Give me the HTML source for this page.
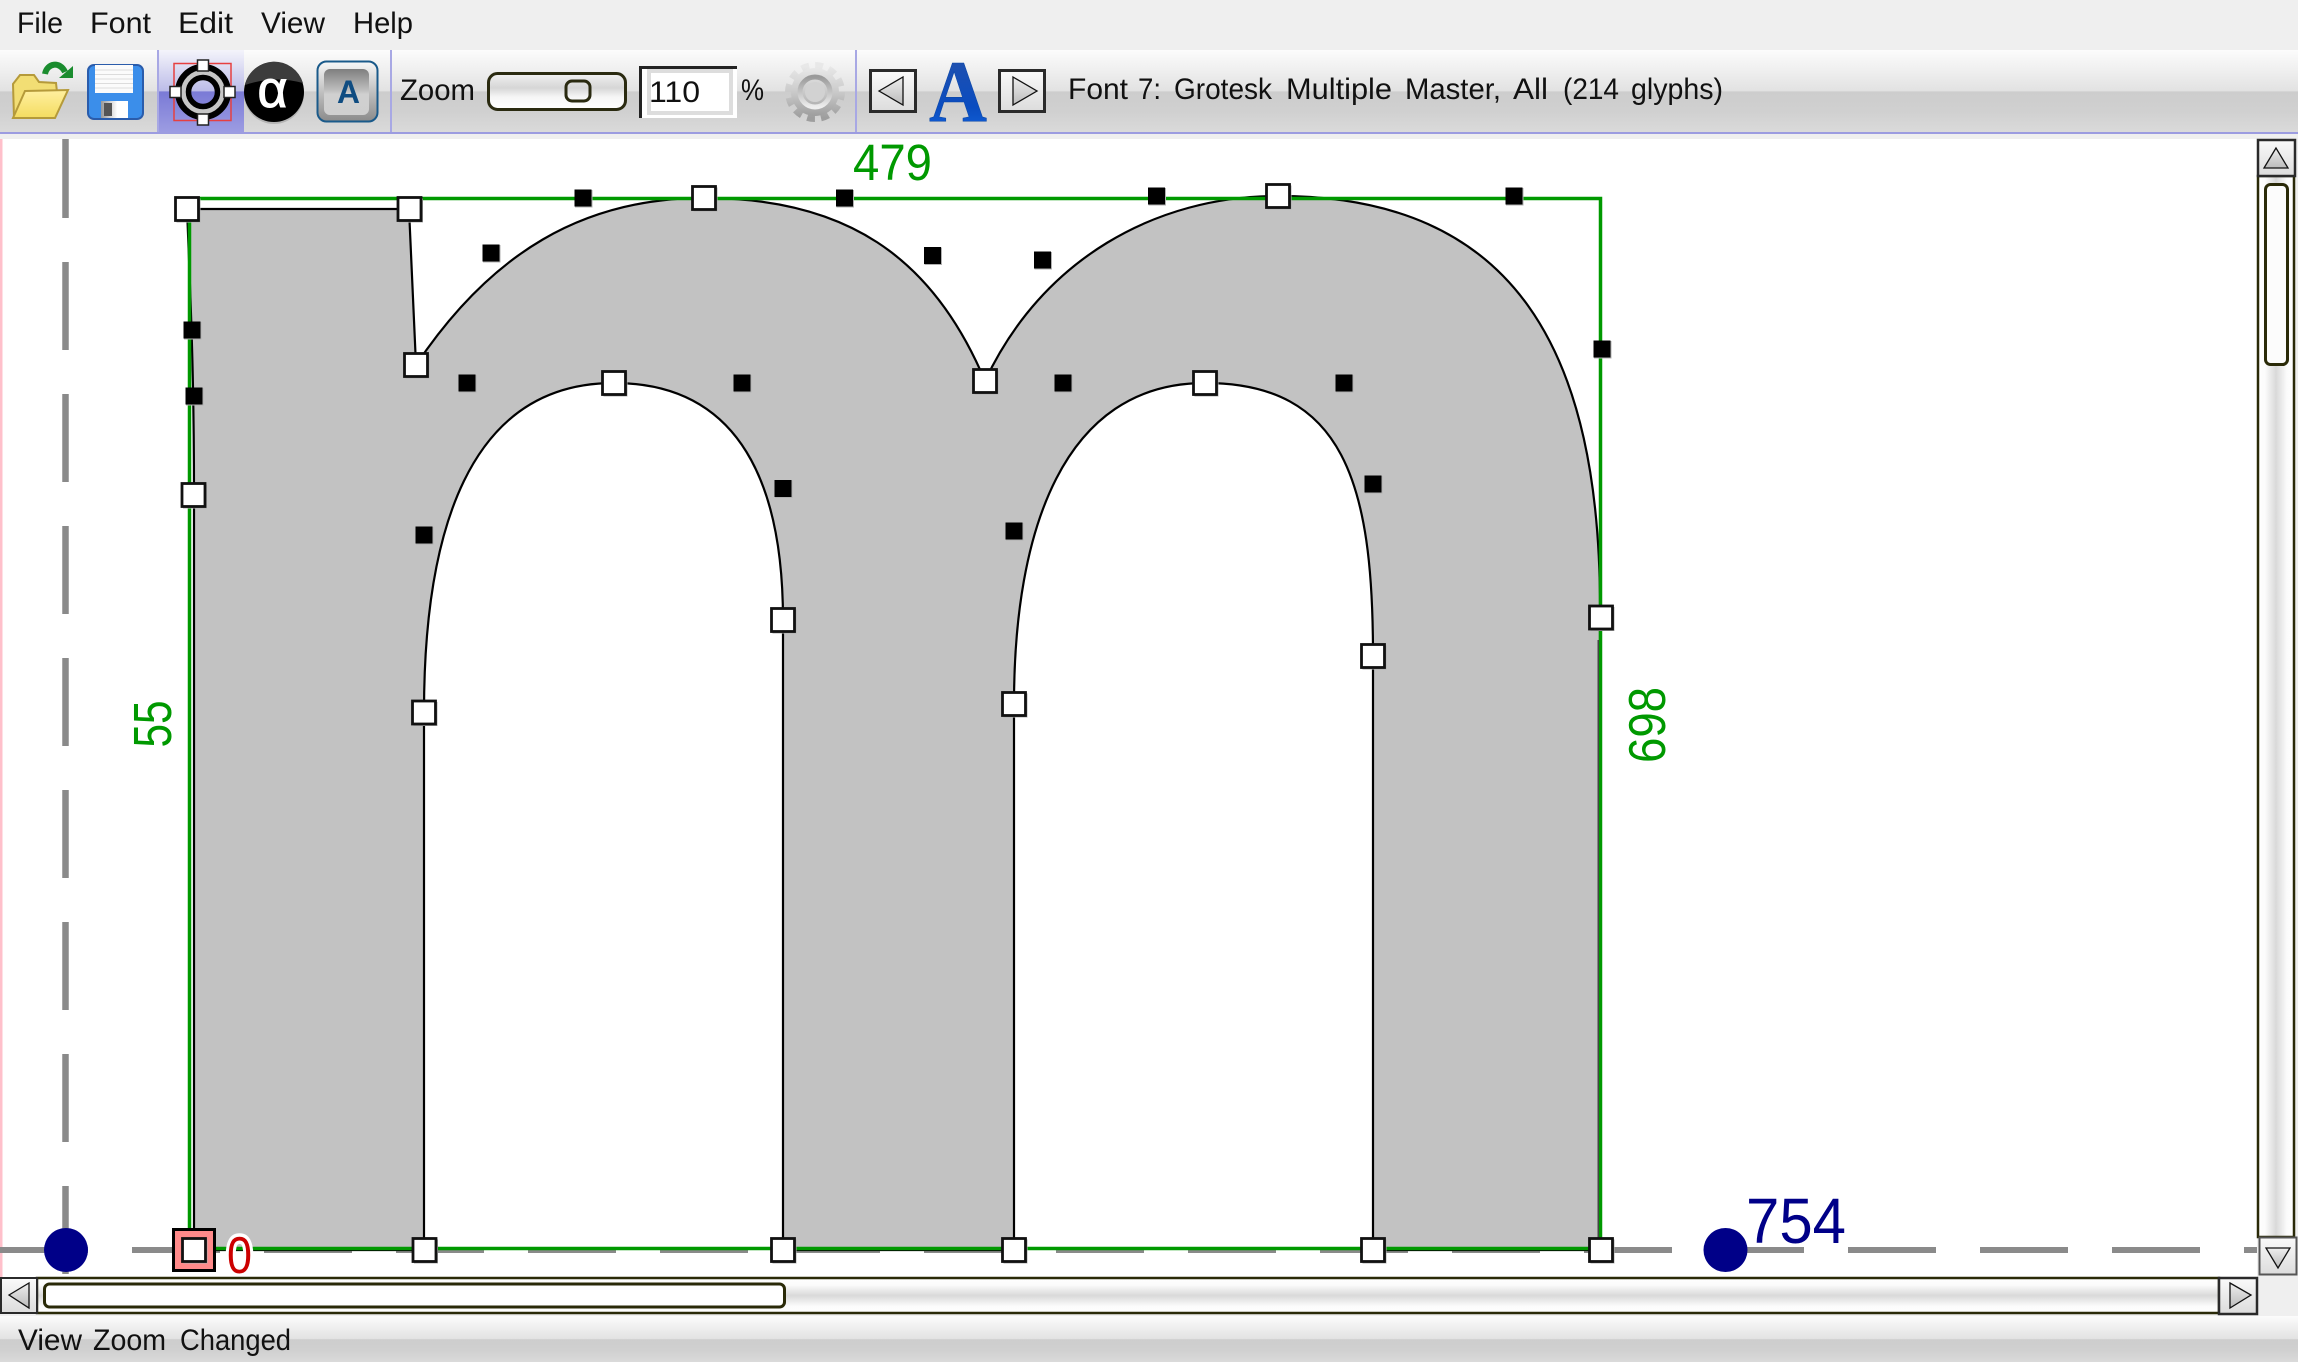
<!DOCTYPE html>
<html><head><meta charset="utf-8"><title>Font 7: Grotesk Multiple Master</title>
<style>
html,body{margin:0;padding:0;background:#efefef;width:2298px;height:1362px;overflow:hidden}
svg{display:block}
text{font-family:"Liberation Sans",sans-serif}
</style></head><body>
<svg xmlns="http://www.w3.org/2000/svg" width="2298" height="1362" viewBox="0 0 2298 1362">
<defs>
<linearGradient id="bar" x1="0" y1="0" x2="0" y2="1"><stop offset="0" stop-color="#fcfcfc"/><stop offset=".5" stop-color="#e2e2e2"/><stop offset=".51" stop-color="#cdcdcd"/><stop offset=".75" stop-color="#d0d0d0"/><stop offset="1" stop-color="#dadada"/></linearGradient>
<linearGradient id="hl" x1="0" y1="0" x2="0" y2="1"><stop offset="0" stop-color="#f4f4fb"/><stop offset=".5" stop-color="#bcbce8"/><stop offset=".51" stop-color="#7a7ad6"/><stop offset="1" stop-color="#9c9ce2"/></linearGradient>
<linearGradient id="sv" x1="0" y1="0" x2="0" y2="1"><stop offset="0" stop-color="#fff"/><stop offset=".2" stop-color="#fbfbfb"/><stop offset=".5" stop-color="#d9d9d9"/><stop offset=".8" stop-color="#fbfbfb"/><stop offset="1" stop-color="#fff"/></linearGradient>
<linearGradient id="sh" x1="0" y1="0" x2="1" y2="0"><stop offset="0" stop-color="#fff"/><stop offset=".2" stop-color="#fbfbfb"/><stop offset=".5" stop-color="#d9d9d9"/><stop offset=".8" stop-color="#fbfbfb"/><stop offset="1" stop-color="#fff"/></linearGradient>
<linearGradient id="sl" x1="0" y1="0" x2="0" y2="1"><stop offset="0" stop-color="#f2f2f2"/><stop offset=".4" stop-color="#d6d6d6"/><stop offset=".65" stop-color="#f6f6f6"/><stop offset="1" stop-color="#fff"/></linearGradient>
<linearGradient id="btn" x1="0" y1="0" x2="0" y2="1"><stop offset="0" stop-color="#fafafa"/><stop offset="1" stop-color="#dcdcdc"/></linearGradient>
<linearGradient id="tri" x1="0" y1="0" x2="0" y2="1"><stop offset="0" stop-color="#eeeeee"/><stop offset="1" stop-color="#bbbbbb"/></linearGradient>
<linearGradient id="fold" x1="0" y1="0" x2="0" y2="1"><stop offset="0" stop-color="#fff0a0"/><stop offset="1" stop-color="#f4dc60"/></linearGradient>
<linearGradient id="shut" x1="0" y1="0" x2="1" y2="0"><stop offset="0" stop-color="#999"/><stop offset=".6" stop-color="#fff"/><stop offset="1" stop-color="#fff"/></linearGradient>
<linearGradient id="abtn" x1="0" y1="0" x2="0" y2="1"><stop offset="0" stop-color="#7f7f7f"/><stop offset=".45" stop-color="#bdbdbd"/><stop offset=".55" stop-color="#d0d0d0"/><stop offset="1" stop-color="#cfcfcf"/></linearGradient>
<linearGradient id="abg" x1="0" y1="0" x2="0" y2="1"><stop offset="0" stop-color="#f8f8f8"/><stop offset="1" stop-color="#8a8a8a"/></linearGradient>
<linearGradient id="blueA" x1="0" y1="0" x2="0" y2="1"><stop offset="0" stop-color="#c0cce0"/><stop offset=".2" stop-color="#1e50b0"/><stop offset=".65" stop-color="#0a4cc0"/><stop offset="1" stop-color="#1468e0"/></linearGradient>
<linearGradient id="gear" x1="0" y1="0" x2="0" y2="1"><stop offset="0" stop-color="#e8e8e8"/><stop offset=".5" stop-color="#cacaca"/><stop offset="1" stop-color="#9e9e9e"/></linearGradient>
<linearGradient id="gear2" x1="0" y1="0" x2="0" y2="1"><stop offset="0" stop-color="#9a9a9a"/><stop offset="1" stop-color="#eeeeee"/></linearGradient>
<g id="h"><rect x="-10.5" y="-10.5" width="24" height="24" fill="#b0b0b0"/><rect x="-11.5" y="-11.5" width="23" height="23" fill="#fff" stroke="#111" stroke-width="2.8"/></g>
<g id="b"><rect x="-8" y="-8" width="17.5" height="17.5" fill="#b0b0b0"/><rect x="-8.5" y="-8.5" width="17" height="17" fill="#000"/></g>
</defs>

<!-- backgrounds -->
<rect width="2298" height="1362" fill="#efefef"/>
<rect x="0" y="50" width="2298" height="82" fill="url(#bar)"/>
<rect x="0" y="132" width="2298" height="2" fill="#9c9ce0"/>
<rect x="0" y="139" width="2257" height="1138" fill="#fff"/>
<rect x="0" y="139" width="2.5" height="1138" fill="#ffc0cb"/>

<!-- menu -->
<g font-size="30" fill="#111">
<text x="17" y="33" textLength="46" lengthAdjust="spacingAndGlyphs">File</text>
<text x="90" y="33" textLength="61" lengthAdjust="spacingAndGlyphs">Font</text>
<text x="178" y="33" textLength="55" lengthAdjust="spacingAndGlyphs">Edit</text>
<text x="261" y="33" textLength="64" lengthAdjust="spacingAndGlyphs">View</text>
<text x="353" y="33" textLength="60" lengthAdjust="spacingAndGlyphs">Help</text>
</g>

<!-- toolbar separators -->
<rect x="157" y="50" width="2" height="82" fill="#a8a8e4"/>
<rect x="390" y="50" width="2" height="82" fill="#a8a8e4"/>
<rect x="855" y="50" width="2" height="82" fill="#a8a8e4"/>

<!-- folder icon -->
<path d="M13,84 L20,75 L34,75 L39,82 L56,83 L57,92 L26,92 L14,118 Z" fill="#f2de74" stroke="#b59a3a" stroke-width="2"/>
<path d="M25,91 L68,90 L55,118 L13,118 Z" fill="url(#fold)" stroke="#b59a3a" stroke-width="2"/>
<path d="M45,74 C47,63 60,61 65,72" fill="none" stroke="#1a8c2e" stroke-width="6"/>
<polygon points="73,66 73,78 59,78" fill="#1a8c2e"/>

<!-- disk icon -->
<rect x="88" y="65" width="55" height="54" rx="6" fill="#3b8eea" stroke="#2a5cab" stroke-width="2"/>
<rect x="95" y="65" width="38" height="28" fill="#fbfbfb"/>
<path d="M95,70H133M95,74.500H133M95,79H133M95,83.500H133M95,88H133" stroke="#dcdcdc" stroke-width="1"/>
<rect x="101" y="101" width="27" height="17" fill="url(#shut)"/>
<rect x="104" y="103" width="8" height="13" fill="#555"/>

<!-- pointer tool (active) -->
<rect x="159" y="50" width="85" height="82" fill="url(#hl)"/>
<rect x="174" y="63.500" width="57" height="57" fill="none" stroke="#e64040" stroke-width="1.5"/>
<circle cx="203" cy="92" r="19.500" fill="none" stroke="#c6c6c6" stroke-width="6"/>
<circle cx="203" cy="92" r="25" fill="none" stroke="#000" stroke-width="6"/>
<circle cx="203" cy="92" r="14.500" fill="none" stroke="#000" stroke-width="5.500"/>
<g fill="#fff" stroke="#222" stroke-width="1.500">
<rect x="197.500" y="60" width="11" height="11"/><rect x="197.500" y="114" width="11" height="11"/>
<rect x="170" y="86.500" width="11" height="11"/><rect x="224" y="86.500" width="11" height="11"/>
</g>

<!-- alpha tool -->
<circle cx="274" cy="94" r="30" fill="#b4b4b4"/>
<circle cx="274" cy="92" r="30" fill="#000"/>
<path d="M245,85 A30,30 0 0 1 303,83 Q274,75 245,85 Z" fill="#3c3c3c"/>
<text x="257.500" y="107" font-size="52" fill="#fff" stroke="#fff" stroke-width="1" textLength="30" lengthAdjust="spacingAndGlyphs">α</text>

<!-- A tool -->
<rect x="317.500" y="61.500" width="60" height="60" rx="9" fill="url(#abg)" stroke="#1a5a8a" stroke-width="2"/>
<rect x="324" y="69" width="45" height="46" rx="6" fill="url(#abtn)"/>
<text x="337" y="103" font-size="32" font-weight="bold" fill="#0f4c81" textLength="23" lengthAdjust="spacingAndGlyphs">A</text>

<!-- zoom controls -->
<text x="400" y="100" font-size="30" fill="#111" textLength="75" lengthAdjust="spacingAndGlyphs">Zoom</text>
<rect x="488.500" y="73.500" width="137" height="36" rx="9" fill="url(#sl)" stroke="#2a2a10" stroke-width="3"/>
<rect x="566" y="81" width="24" height="20" rx="6" fill="none" stroke="#2a2a10" stroke-width="3"/>
<rect x="639" y="66" width="98" height="52" fill="#fff"/>
<rect x="649" y="71" width="82" height="42" fill="#fff" stroke="#dddddd" stroke-width="4"/>
<path d="M640.500,118V67.500H737" fill="none" stroke="#222" stroke-width="3"/>
<text x="649" y="102" font-size="30" fill="#111" textLength="51" lengthAdjust="spacingAndGlyphs">110</text>
<text x="741" y="100" font-size="30" fill="#111" textLength="23" lengthAdjust="spacingAndGlyphs">%</text>

<!-- gear -->
<circle cx="815" cy="92" r="25.500" fill="none" stroke="url(#gear)" stroke-width="9" stroke-dasharray="7.500 5.850"/>
<circle cx="815" cy="92" r="24" fill="url(#gear)"/>
<circle cx="815" cy="92" r="15" fill="none" stroke="url(#gear2)" stroke-width="5"/>
<circle cx="815" cy="92" r="10" fill="#d2d2d2"/>

<!-- prev / A / next -->
<rect x="870.500" y="70.500" width="45" height="41" fill="url(#btn)" stroke="#2a2a2a" stroke-width="3"/>
<polygon points="879,91 903,77 903,105" fill="url(#tri)" stroke="#111" stroke-width="1.300"/>
<text x="929" y="121" style="font-family:'Liberation Serif',serif" font-size="88" font-weight="bold" fill="url(#blueA)" stroke="#0b48a8" stroke-width=".6" textLength="58" lengthAdjust="spacingAndGlyphs">A</text>
<rect x="999.500" y="70.500" width="45" height="41" fill="url(#btn)" stroke="#2a2a2a" stroke-width="3"/>
<polygon points="1013,77 1037,91 1013,105" fill="url(#tri)" stroke="#111" stroke-width="1.300"/>
<g font-size="30" fill="#111">
<text x="1068" y="99" textLength="60" lengthAdjust="spacingAndGlyphs">Font</text>
<text x="1138" y="99" textLength="23" lengthAdjust="spacingAndGlyphs">7:</text>
<text x="1174" y="99" textLength="98" lengthAdjust="spacingAndGlyphs">Grotesk</text>
<text x="1286" y="99" textLength="106" lengthAdjust="spacingAndGlyphs">Multiple</text>
<text x="1405" y="99" textLength="96" lengthAdjust="spacingAndGlyphs">Master,</text>
<text x="1513" y="99" textLength="35" lengthAdjust="spacingAndGlyphs">All</text>
<text x="1563" y="99" textLength="56" lengthAdjust="spacingAndGlyphs">(214</text>
<text x="1631" y="99" textLength="92" lengthAdjust="spacingAndGlyphs">glyphs)</text>
</g>

<!-- guides -->
<line x1="0" y1="1250" x2="2257" y2="1250" stroke="#8a8a8a" stroke-width="6" stroke-dasharray="88 44"/>
<line x1="65.500" y1="139" x2="65.500" y2="1274" stroke="#8a8a8a" stroke-width="6.500" stroke-dasharray="88 44" stroke-dashoffset="9"/>

<!-- glyph -->
<path d="M194,1250 L194,495 C194,396 192,330 187,209 L409,209 L416,365 C491,253 583,198 704,198 C844,198 932,255 985,381 C1042,259 1156,196 1278,196 C1514,196 1602,349 1600,617 L1600,1250 L1373,1250 L1373,655 C1373,484 1344,383 1205,383 C1063,383 1014,531 1014,704 L1014,1250 L783,1250 L783,620 C783,488 742,383 614,383 C467,383 424,535 424,712 L424,1250 Z" fill="#c2c2c2" stroke="#000" stroke-width="2.200" stroke-linejoin="miter"/>

<!-- bbox -->
<path d="M189.500,1248.500 V198.500 H1600.500 V1248.500 Z" fill="none" stroke="#009900" stroke-width="3.500"/>
<rect x="1597.500" y="640" width="1.500" height="600" fill="#444"/>
<line x1="194" y1="495" x2="194" y2="1250" stroke="#000" stroke-width="2"/>

<!-- guide dots -->
<circle cx="66" cy="1250" r="22" fill="#000088"/>
<circle cx="1725.500" cy="1250" r="22" fill="#000088"/>

<!-- control points -->
<use href="#b" x="491" y="253"/><use href="#b" x="467" y="383"/><use href="#b" x="192" y="330"/><use href="#b" x="194" y="396"/>
<use href="#b" x="583" y="198"/><use href="#b" x="844.500" y="198"/><use href="#b" x="1156.500" y="196"/><use href="#b" x="1514" y="196"/>
<use href="#b" x="932.500" y="255.500"/><use href="#b" x="1042.500" y="260"/><use href="#b" x="742" y="383"/><use href="#b" x="1063" y="383"/>
<use href="#b" x="1344" y="383"/><use href="#b" x="783" y="488.500"/><use href="#b" x="1373" y="484"/><use href="#b" x="424" y="535"/>
<use href="#b" x="1014" y="531"/><use href="#b" x="1602" y="349"/>

<!-- on-curve points -->
<rect x="173.500" y="1229.500" width="41" height="41" fill="#ff8a8a" stroke="#000" stroke-width="3"/>
<use href="#h" x="194" y="1250"/>
<use href="#h" x="187" y="209"/><use href="#h" x="409.500" y="209"/><use href="#h" x="416" y="365"/><use href="#h" x="193.500" y="495"/>
<use href="#h" x="704" y="198"/><use href="#h" x="1278" y="196"/><use href="#h" x="985" y="381"/><use href="#h" x="614" y="383"/>
<use href="#h" x="1205" y="383"/><use href="#h" x="783" y="620"/><use href="#h" x="1373" y="656"/><use href="#h" x="424" y="712.500"/>
<use href="#h" x="1014" y="704"/><use href="#h" x="1601" y="617.500"/>
<use href="#h" x="424.500" y="1250"/><use href="#h" x="783" y="1250"/><use href="#h" x="1014" y="1250"/><use href="#h" x="1373" y="1250"/><use href="#h" x="1601" y="1250"/>

<!-- labels -->
<text x="853" y="180" font-size="51" fill="#009900" textLength="79" lengthAdjust="spacingAndGlyphs">479</text>
<text transform="translate(171,747.500) rotate(-90)" font-size="54" fill="#009900" textLength="47" lengthAdjust="spacingAndGlyphs">55</text>
<text transform="translate(1665,763) rotate(-90)" font-size="52" fill="#009900" textLength="76" lengthAdjust="spacingAndGlyphs">698</text>
<text x="227" y="1273" font-size="52" fill="#cc0000" stroke="#fff" stroke-width="7" paint-order="stroke" textLength="25" lengthAdjust="spacingAndGlyphs">0</text>
<text x="1746" y="1243" font-size="64" fill="#000088" textLength="100" lengthAdjust="spacingAndGlyphs">754</text>

<!-- vertical scrollbar -->
<rect x="2258" y="176" width="36" height="1061" fill="url(#sh)" stroke="#2a2a08" stroke-width="2.500"/>
<rect x="2265.500" y="184.500" width="22" height="180" rx="5" fill="#fcfcfc" stroke="#2a2a08" stroke-width="3"/>
<rect x="2258" y="140" width="37" height="36" fill="url(#btn)" stroke="#2a2a2a" stroke-width="2.500"/>
<polygon points="2276,148 2264,168 2288,168" fill="url(#tri)" stroke="#111" stroke-width="1.300"/>
<rect x="2259.500" y="1237.500" width="37" height="37" fill="url(#btn)" stroke="#555" stroke-width="2"/>
<polygon points="2266,1248 2290,1248 2278,1268" fill="url(#tri)" stroke="#111" stroke-width="1.300"/>

<!-- horizontal scrollbar -->
<rect x="37" y="1278" width="2182" height="35" fill="url(#sv)" stroke="#2a2a08" stroke-width="2.500"/>
<rect x="44.500" y="1284" width="740" height="23" rx="5" fill="#fff" stroke="#2a2a08" stroke-width="3"/>
<rect x="1" y="1278" width="36" height="35" fill="url(#btn)" stroke="#2a2a2a" stroke-width="2"/>
<polygon points="9,1295 29,1283 29,1308" fill="url(#tri)" stroke="#111" stroke-width="1.300"/>
<rect x="2219" y="1278" width="38" height="36" fill="url(#btn)" stroke="#2a2a2a" stroke-width="2.500"/>
<polygon points="2230,1283 2251,1295 2230,1308" fill="url(#tri)" stroke="#111" stroke-width="1.300"/>

<!-- status bar -->
<rect x="0" y="1316" width="2298" height="46" fill="url(#bar)"/>
<g font-size="30" fill="#111">
<text x="18" y="1350" textLength="64" lengthAdjust="spacingAndGlyphs">View</text>
<text x="93" y="1350" textLength="73" lengthAdjust="spacingAndGlyphs">Zoom</text>
<text x="180" y="1350" textLength="111" lengthAdjust="spacingAndGlyphs">Changed</text>
</g>
</svg>
</body></html>
